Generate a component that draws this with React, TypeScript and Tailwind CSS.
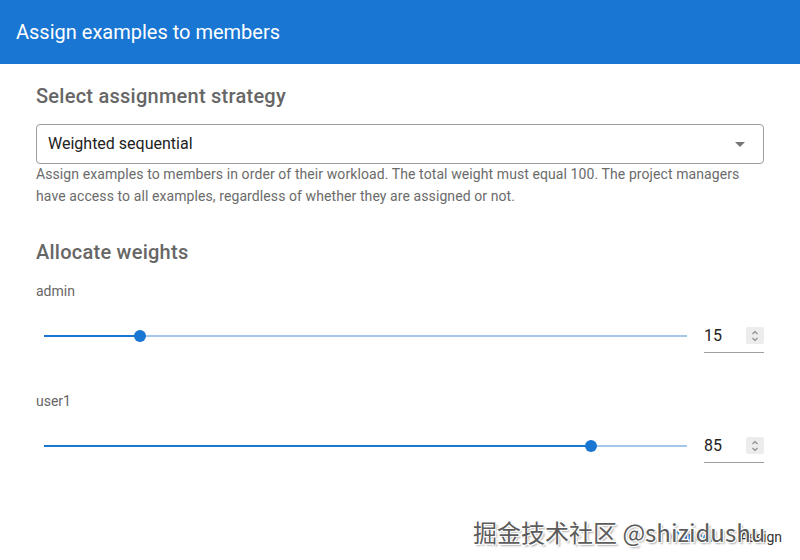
import React from "react";

function Spinner() {
  return (
    <div className="w-[18px] h-[17px] bg-[#ececec] rounded-[2px] flex flex-col items-center justify-center">
      <svg width="10" height="14" viewBox="0 0 10 14" fill="none" stroke="#8a8a8a" strokeWidth="1.1">
        <path d="M2.5 5 L5 2.5 L7.5 5" />
        <path d="M2.5 9 L5 11.5 L7.5 9" />
      </svg>
    </div>
  );
}

function WeightRow({ name, value }: { name: string; value: number }) {
  return (
    <div>
      <div className="text-[14px] leading-[20px] text-[#666666]">{name}</div>
      <div className="flex items-center h-[40px] mt-[15px]">
        <div className="flex-1 pl-2 relative h-[12px] flex items-center">
          <div className="relative w-full h-[2px] bg-[#a3c8ec]">
            <div className="absolute left-0 top-0 h-[2px] bg-[#1976d2]" style={{ width: `${value}%` }} />
            <div
              className="absolute top-[-5px] w-[12px] h-[12px] rounded-full bg-[#1976d2] -ml-[6px]"
              style={{ left: `${value}%` }}
            />
          </div>
        </div>
        <div className="ml-[17px] w-[60px] h-[34px] border-b border-[#9e9e9e] flex items-center justify-between">
          <span className="text-[16px] text-[#222222]">{value}</span>
          <Spinner />
        </div>
      </div>
    </div>
  );
}

export default function App() {
  return (
    <div className="w-[800px] h-[560px] bg-white relative overflow-hidden font-['Roboto',sans-serif]">
      <div className="h-16 bg-[#1976d2] flex items-center px-4">
        <span className="text-white text-[20px]">Assign examples to members</span>
      </div>
      <div className="px-9 pt-4">
        <div className="text-[20px] leading-[32px] font-medium tracking-[0.25px] text-[#666666]">Select assignment strategy</div>
        <div className="mt-[12px] h-10 border border-[#9e9e9e] rounded-[4px] flex items-center justify-between pl-[11px] pr-[18px]">
          <span className="text-[16px] text-[#222222]">Weighted sequential</span>
          <svg width="10" height="5" viewBox="0 0 10 5">
            <path d="M0 0 L10 0 L5 5 Z" fill="#757575" />
          </svg>
        </div>
        <div className="text-[14px] leading-[22px] tracking-[0.09px] text-[#6b6b6b] max-w-[712px] -mt-[1px]">
          Assign examples to members in order of their workload. The total weight must equal 100. The project managers
          have access to all examples, regardless of whether they are assigned or not.
        </div>
        <div className="mt-[29px] text-[20px] leading-[32px] font-medium tracking-[0.25px] text-[#666666]">Allocate weights</div>
        <div className="mt-[13px]">
          <WeightRow name="admin" value={15} />
        </div>
        <div className="mt-[35px]">
          <WeightRow name="user1" value={85} />
        </div>
      </div>
      <div className="absolute bottom-[12px] right-[18px] flex items-center gap-[26px] text-[14px]">
        <span className="text-[#1976d2]">Cancel</span>
        <span className="text-[#333333]">Assign</span>
      </div>
      <div
        className="absolute left-[473px] top-[515px] text-[24px] leading-[34px] text-[#5c5c5c] whitespace-nowrap font-['Noto_Sans_CJK_SC',sans-serif] [text-shadow:1px_1px_0_#fff,-1px_-1px_0_#fff,1px_-1px_0_#fff,-1px_1px_0_#fff,2px_2px_2px_rgba(0,0,0,0.35)]"
      >
        掘金技术社区 @shizidushu
      </div>
    </div>
  );
}
